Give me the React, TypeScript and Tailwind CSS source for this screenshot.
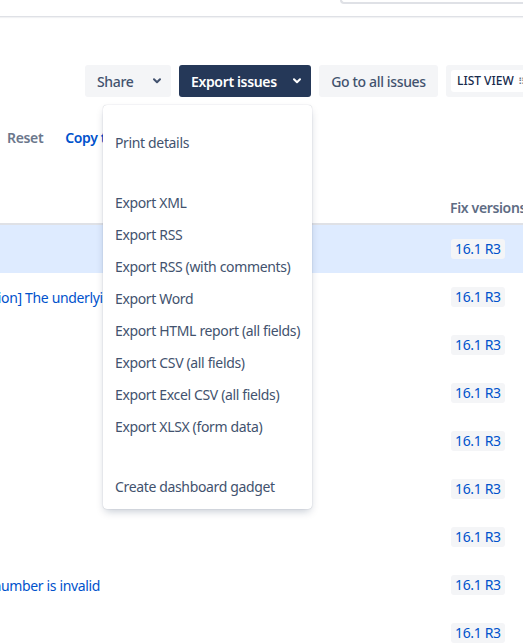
import React from "react";

const MENU_GROUPS: string[][] = [
  ["Print details"],
  [
    "Export XML",
    "Export RSS",
    "Export RSS (with comments)",
    "Export Word",
    "Export HTML report (all fields)",
    "Export CSV (all fields)",
    "Export Excel CSV (all fields)",
    "Export XLSX (form data)",
  ],
  ["Create dashboard gadget"],
];

const ROWS: { summary?: string; offset?: string; highlighted?: boolean }[] = [
  { highlighted: true },
  { summary: "[Regression] The underlying data is lost", offset: "-ml-[56px]" },
  {},
  {},
  {},
  {},
  {},
  { summary: "Serial number is invalid", offset: "-ml-[45px]" },
  {},
];

function Chevron({ className }: { className?: string }) {
  return (
    <svg width="8" height="6" viewBox="0 0 8 6" className={className} fill="none">
      <path d="M1 1.2 4 4.2 7 1.2" stroke="currentColor" strokeWidth="2" strokeLinecap="round" strokeLinejoin="round" />
    </svg>
  );
}

function ExportMenu() {
  return (
    <div className="absolute right-[-1px] top-[calc(100%+8px)] z-10 flex w-[209px] flex-col gap-[28px] rounded-[4px] bg-white pt-[21px] pb-[7px] shadow-[0_4px_8px_-2px_rgba(9,30,66,0.25),0_0_1px_rgba(9,30,66,0.31)]">
      {MENU_GROUPS.map((group, gi) => (
        <div key={gi}>
          {group.map((label) => (
            <div key={label} className="flex h-[32px] items-center px-[12px] text-[14px] text-[#42526e] whitespace-nowrap">
              {label}
            </div>
          ))}
        </div>
      ))}
    </div>
  );
}

export default function App() {
  return (
    <div className="h-[644px] w-[523px] overflow-hidden bg-white font-['Noto_Sans',sans-serif] text-[14px] tracking-[-0.35px]">
      {/* top bar */}
      <div className="flex h-[17px] justify-end border-b border-[#dfe1e6] shadow-[0_1px_1px_rgba(9,30,66,0.06)]">
        <div className="h-[4px] w-[183px] rounded-bl-[4px] border-b-2 border-l-2 border-[#dfe1e6]" />
      </div>

      {/* actions */}
      <div className="mt-[48px] flex gap-[8px] pl-[85px] whitespace-nowrap">
        <button className="flex h-[32px] w-[86px] shrink-0 items-center justify-between rounded-[3px] bg-[#f4f5f7] pl-[12px] pr-[10px] font-medium text-[#42526e]">
          Share
          <Chevron />
        </button>
        <div className="relative shrink-0">
          <button className="flex h-[32px] w-[132px] items-center justify-between rounded-[3px] bg-[#253858] pl-[12px] pr-[10px] font-semibold text-white">
            Export issues
            <Chevron />
          </button>
          <ExportMenu />
        </div>
        <button className="flex h-[32px] w-[119px] shrink-0 items-center justify-center rounded-[3px] bg-[#f4f5f7] font-medium text-[#42526e]">
          Go to all issues
        </button>
        <div className="flex h-[32px] w-[100px] shrink-0 items-center rounded-[3px] bg-[#f4f5f7] px-[5px]">
          <div className="flex h-[22px] items-center gap-[4px] rounded-[3px] bg-white pl-[6px] pr-[6px] text-[12px] font-medium tracking-normal text-[#172b4d]">
            LIST VIEW
            <span className="text-[10px] text-[#6b778c]">⠿</span>
          </div>
        </div>
      </div>

      {/* filter actions */}
      <div className="mt-[30px] flex gap-[22px] pl-[7px] font-semibold whitespace-nowrap">
        <span className="text-[#6b778c]">Reset</span>
        <span className="text-[#0052cc]">Copy the filter</span>
      </div>

      {/* table */}
      <div className="mt-[49px] w-[600px]">
        <div className="flex h-[28px] items-start border-b-2 border-[#dfe1e6]">
          <div className="w-[450px] shrink-0" />
          <div className="font-semibold text-[#5e6c84]">Fix versions</div>
        </div>
        {ROWS.map((row, i) => (
          <div key={i} className={`flex h-[48px] items-center ${row.highlighted ? "bg-[#deebff]" : ""}`}>
            <div className="w-[450px] shrink-0 overflow-hidden whitespace-nowrap">
              {row.summary && <span className={`inline-block text-[#0052cc] ${row.offset}`}>{row.summary}</span>}
            </div>
            <div className="flex">
              <span className="ml-[1px] rounded-[3px] bg-[#f4f5f7] px-[4px] leading-[20px] text-[#0052cc]">16.1 R3</span>
            </div>
          </div>
        ))}
      </div>
    </div>
  );
}
